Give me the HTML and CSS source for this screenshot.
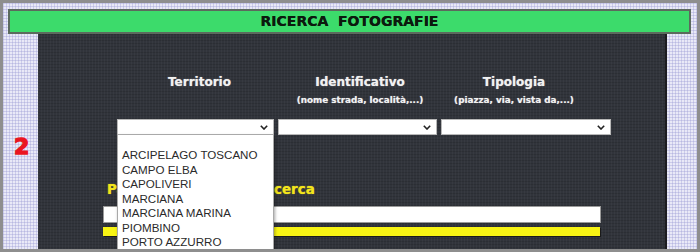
FILE: index.html
```html
<!DOCTYPE html>
<html lang="it">
<head>
    <meta charset="UTF-8">
    <title>Ricerca fotografie</title>
    <link rel="stylesheet" href="styles.css">
</head>
<body>
    <div class="frame">
        <!-- titolo -->
        <div class="title-bar">RICERCA&nbsp; FOTOGRAFIE</div>

        <div class="main">
            <div class="side-left"><span class="step">2</span></div>

            <div class="panel">
                <div class="labels">
                    <div class="label"><b>Territorio</b></div>
                    <div class="label"><b>Identificativo</b><small>(nome strada, località,...)</small></div>
                    <div class="label"><b>Tipologia</b><small>(piazza, via, vista da,...)</small></div>
                </div>

                <div class="selects">
                    <div class="select-wrap">
                        <div class="select">
                            <svg class="chevron" width="8" height="5" viewBox="0 0 8 5"><polyline points="0.8,0.8 4,4 7.2,0.8" fill="none" stroke="#222" stroke-width="1.6"/></svg>
                        </div>
                        <!-- lista aperta -->
                        <ul class="options">
                            <li>&nbsp;</li>
                            <li>ARCIPELAGO TOSCANO</li>
                            <li>CAMPO ELBA</li>
                            <li>CAPOLIVERI</li>
                            <li>MARCIANA</li>
                            <li>MARCIANA MARINA</li>
                            <li>PIOMBINO</li>
                            <li>PORTO AZZURRO</li>
                        </ul>
                    </div>
                    <div class="select-wrap">
                        <div class="select">
                            <svg class="chevron" width="8" height="5" viewBox="0 0 8 5"><polyline points="0.8,0.8 4,4 7.2,0.8" fill="none" stroke="#222" stroke-width="1.6"/></svg>
                        </div>
                    </div>
                    <div class="select-wrap">
                        <div class="select">
                            <svg class="chevron" width="8" height="5" viewBox="0 0 8 5"><polyline points="0.8,0.8 4,4 7.2,0.8" fill="none" stroke="#222" stroke-width="1.6"/></svg>
                        </div>
                    </div>
                </div>

                <div class="keyword-label">Parola chiave per la ricerca</div>
                <div class="keyword-input"></div>
                <div class="yellow-bar"></div>
            </div>

            <div class="side-right"></div>
        </div>
    </div>
</body>
</html>
```

FILE: styles.css
```css
body {
    margin: 0;
    font-family: "DejaVu Sans", Verdana, sans-serif;
}
.frame {
    width: 700px;
    height: 252px;
    box-sizing: border-box;
    border: 3px solid #8e8e8e;
    overflow: hidden;
    background-color: #e9e9f7;
    background-image:
        repeating-linear-gradient(to right, rgba(150, 150, 210, 0.35) 0 1px, transparent 1px 3px),
        repeating-linear-gradient(to bottom, rgba(150, 150, 210, 0.35) 0 1px, transparent 1px 3px);
}
.title-bar {
    margin: 6px 6px 0 5px;
    height: 25px;
    box-sizing: border-box;
    border: 2px solid #5c6a5e;
    background: #3cdb6b;
    color: #0c1a0e;
    font-weight: bold;
    font-size: 14px;
    line-height: 21px;
    text-align: center;
    text-shadow: 0 0 0.6px #0c1a0e;
}
.main {
    display: flex;
    height: 215px;
}
.side-left {
    width: 35px;
}
.step {
    display: block;
    margin: 103px 0 0 11px;
    color: #ea1520;
    font-weight: bold;
    font-size: 22px;
    line-height: 20px;
    -webkit-text-stroke: 1.3px #ea1520;
}
.panel {
    width: 627px;
    border-right: 2px solid #1c1c20;
    background-color: #31343b;
    background-image:
        repeating-linear-gradient(to right, rgba(255, 255, 255, 0.03) 0 1px, transparent 1px 3px),
        repeating-linear-gradient(to bottom, rgba(0, 0, 0, 0.12) 0 1px, transparent 1px 3px);
}
.side-right {
    flex: 1;
}
.labels {
    display: grid;
    grid-template-columns: 165px 156px 152px;
    margin: 41px 0 0 79px;
    color: #f2f2f2;
    text-align: center;
    text-shadow: 0 0 1px rgba(255, 255, 255, 0.6);
}
.label b {
    display: block;
    font-size: 12px;
    line-height: 15px;
}
.label small {
    display: block;
    margin-top: 4px;
    font-size: 8.8px;
    font-weight: bold;
    line-height: 12px;
}
.selects {
    display: grid;
    grid-template-columns: 157px 159px 170px;
    column-gap: 4px;
    margin: 13px 0 0 79px;
}
.select-wrap {
    position: relative;
}
.select {
    height: 16px;
    box-sizing: border-box;
    border: 1px solid #b8b8b8;
    background: #fff;
    display: flex;
    align-items: center;
    justify-content: flex-end;
    padding-right: 5px;
}
.options {
    position: absolute;
    top: 15px;
    left: 0;
    width: 157px;
    box-sizing: border-box;
    margin: 0;
    padding: 0 0 0 4px;
    list-style: none;
    background: #fff;
    border: 1px solid #a9a9a9;
    box-shadow: 1px 2px 3px rgba(0, 0, 0, 0.35);
    font-family: "Liberation Sans", Arial, sans-serif;
    font-size: 11.6px;
    line-height: 14.5px;
    color: #2a2a2a;
    z-index: 2;
}
.options li:first-child {
    height: 13px;
}
.keyword-label {
    margin: 46px 0 0 69px;
    color: #f3e51c;
    font-weight: bold;
    font-size: 13.5px;
    line-height: 16px;
    text-shadow: 0 0 1px rgba(243, 229, 28, 0.7);
}
.keyword-input {
    margin: 9px 0 0 65px;
    width: 498px;
    height: 17px;
    box-sizing: border-box;
    border: 1px solid #9a9a9a;
    background: #fff;
}
.yellow-bar {
    margin: 4px 0 0 65px;
    width: 497px;
    height: 9px;
    background: #f8f414;
    box-shadow: 1px 1px 0 #1a1a1a;
}
```
